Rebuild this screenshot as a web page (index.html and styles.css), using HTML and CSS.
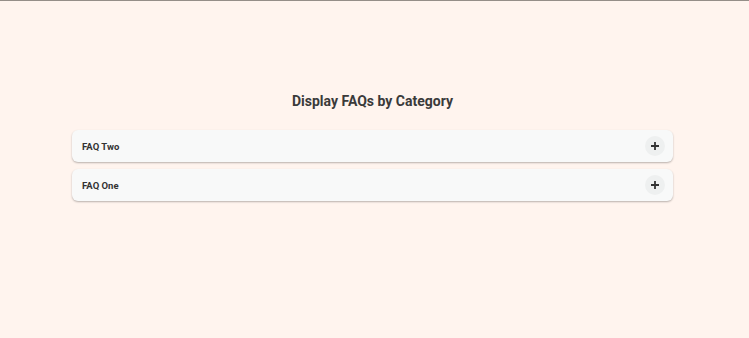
FILE: index.html
```
<!DOCTYPE html>
<html lang="en">
<head>
<meta charset="utf-8">
<title>Display FAQs by Category</title>
<link rel="stylesheet" href="styles.css">
</head>
<body>
<div class="topline"></div>
<main class="faq">
  <h1 class="faq-title">Display FAQs by Category</h1>
  <div class="faq-list">
    <div class="faq-item">
      <span class="faq-q">FAQ Two</span>
      <span class="faq-toggle"><svg viewBox="0 0 10 10" width="10" height="10"><path d="M5 1v8M1 5h8" stroke="#333" stroke-width="1.8" fill="none"/></svg></span>
    </div>
    <div class="faq-item">
      <span class="faq-q">FAQ One</span>
      <span class="faq-toggle"><svg viewBox="0 0 10 10" width="10" height="10"><path d="M5 1v8M1 5h8" stroke="#333" stroke-width="1.8" fill="none"/></svg></span>
    </div>
  </div>
</main>
</body>
</html>
```
FILE: styles.css
```
html, body {
  margin: 0;
  padding: 0;
}
body {
  background: #fff4ee;
  font-family: Roboto, "Liberation Sans", sans-serif;
  color: #333;
  height: 338px;
  overflow: hidden;
}
.topline {
  height: 1px;
  background: #958e88;
}
.faq {
  width: 601px;
  margin: 0 0 0 72px;
  padding-top: 90px;
}
.faq-title {
  margin: 0 0 19px;
  text-align: center;
  font-size: 14px;
  font-weight: 700;
  line-height: 20px;
  color: #3a3a3a;
}
.faq-list {
  display: flex;
  flex-direction: column;
  gap: 7px;
}
.faq-item {
  background: #f8f9f9;
  border-radius: 6px;
  box-shadow: 0 1px 2px rgba(0,0,0,0.28);
  height: 32px;
  display: flex;
  align-items: center;
  justify-content: space-between;
  padding: 0 8px 0 10px;
}
.faq-q {
  font-size: 9.5px;
  font-weight: 700;
  color: #333;
}
.faq-toggle {
  width: 20px;
  height: 20px;
  border-radius: 50%;
  background: #eef0f0;
  display: flex;
  align-items: center;
  justify-content: center;
}
.faq-toggle svg {
  display: block;
}
```
